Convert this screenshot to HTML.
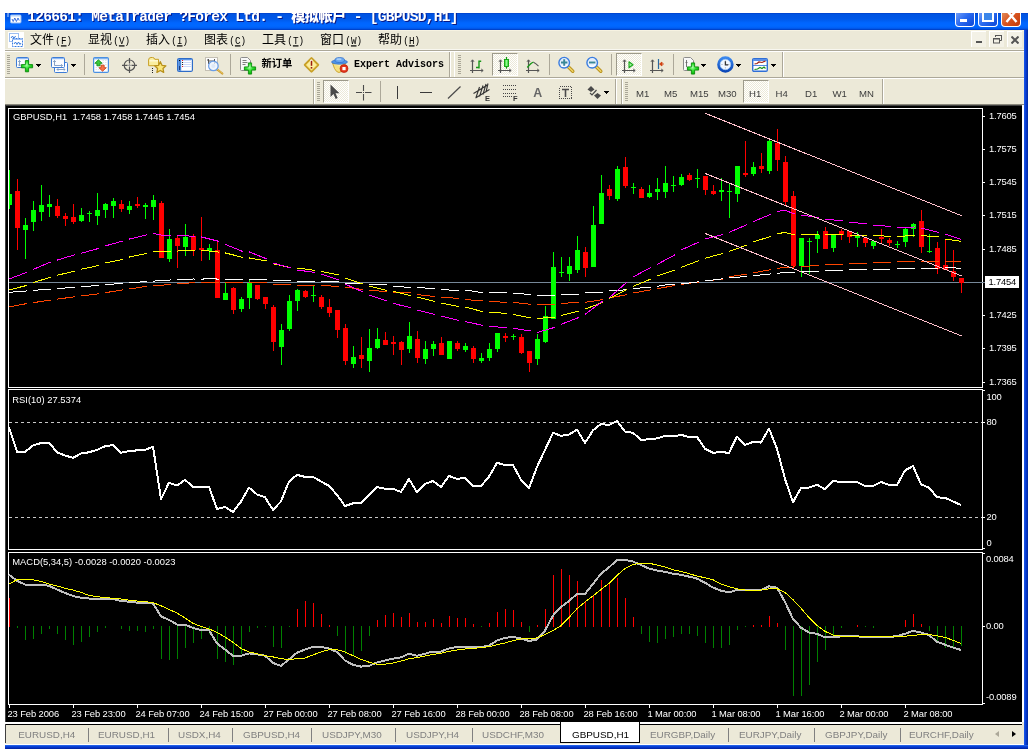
<!DOCTYPE html>
<html lang="zh"><head><meta charset="utf-8"><title>126661: MetaTrader - [GBPUSD,H1]</title>
<style>
html,body{margin:0;padding:0;background:#fff}
body{width:1028px;height:749px;position:relative;overflow:hidden;will-change:transform;font-family:"Liberation Sans","Noto Sans CJK SC",sans-serif}

.abs{position:absolute}
#title{position:absolute;left:5px;top:13px;width:1023px;height:17px;overflow:hidden;
 background:linear-gradient(to bottom,#0046d2 0px,#0046d2 1px,#0054e3 1.5px,#0058e8 6px,#0066ff 10px,#0068ff 13px,#005ef5 15px,#0050dd 16px,#0036b8 17px)}
#title .t{position:absolute;left:22.2px;top:-4.5px;height:17px;white-space:pre;color:#fff;font:bold 14.5px/17px "Liberation Mono","Noto Sans CJK SC",monospace;letter-spacing:-0.7px;text-shadow:1px 1px 0 #0a1883}
#title .t b{font-size:14px;letter-spacing:-0.4px}
.tb{position:absolute;top:0;width:18px;height:13px;border:1px solid #fff;border-top:none;border-radius:0 0 4px 4px;box-sizing:content-box}
#rb{position:absolute;left:1024px;top:30px;width:4px;height:719px;background:linear-gradient(to right,#1a5ae8 0%,#0a3fd8 40%,#00289e 100%)}
#bb{position:absolute;left:5px;top:745px;width:1023px;height:4px;background:linear-gradient(to bottom,#3a78f0 0%,#0a4ae0 25%,#0535c8 60%,#00209a 100%)}
#menu{position:absolute;left:5px;top:30px;width:1019px;height:20px;background:#ece9d8}
#menu .m{position:absolute;top:2px;height:14px;line-height:14px;font-size:12px;color:#000;white-space:pre;font-family:"Noto Sans CJK SC","WenQuanYi Zen Hei",sans-serif}
#menu .m i{font-style:normal;font-family:"Liberation Mono",monospace;font-size:9.3px;letter-spacing:0;margin-left:1.3px;display:inline-block;transform:scaleY(1.22);transform-origin:50% 62%}
#menu .m u{text-decoration:underline}
.mdi{position:absolute;top:1px;width:15px;height:16px;background:#f3f1e6;border-left:1px solid #fff;border-top:1px solid #fff;box-sizing:border-box}
#tbar{position:absolute;left:5px;top:50px;width:1019px;height:55px;background:#ece9d8}
.hl{position:absolute;left:0;width:1019px;height:1px}
.grip{position:absolute;width:3px;height:19px;background:repeating-linear-gradient(to bottom,#a9a697 0,#a9a697 1px,transparent 1px,transparent 2px)}
.vsep{position:absolute;width:1px;height:21px;background:#aca899}
.tend{position:absolute;width:2px;height:25px;background:linear-gradient(to right,#aca899 0,#aca899 1px,#fff 1px,#fff 2px)}
.pressed{position:absolute;box-sizing:border-box;border:1px solid;border-color:#9d9a8b #fff #fff #9d9a8b;
 background-color:#fff;background-image:linear-gradient(45deg,#ece9d8 25%,transparent 25%,transparent 75%,#ece9d8 75%),linear-gradient(45deg,#ece9d8 25%,transparent 25%,transparent 75%,#ece9d8 75%);background-size:2px 2px;background-position:0 0,1px 1px}
.ic{position:absolute;overflow:visible}
.dd{position:absolute;width:5px;height:3px;background:linear-gradient(#000,#000) 0 0/5px 1px no-repeat,linear-gradient(#000,#000) 1px 1px/3px 1px no-repeat,linear-gradient(#000,#000) 2px 2px/1px 1px no-repeat}
.tf{position:absolute;top:38px;height:12px;line-height:12px;font-size:9.6px;color:#3c3c3c;white-space:pre}
#tabs{position:absolute;left:5px;top:722px;width:1019px;height:22px;background:#ece9d8}
#tabs .tab{position:absolute;top:6px;height:14px;line-height:14px;font-size:9.9px;color:#808080;white-space:pre}
#tabs .sp{position:absolute;top:6px;width:1px;height:14px;background:#808080}

</style></head><body>
<div id="title">
<svg class="ic" style="left:2px;top:-1px" width="16" height="12" viewBox="0 0 16 12" ><path d="M1 5V1.500q0-1 1-1h4" fill="none" stroke="#9cc0f8" stroke-width="1.200"/><rect x="3.500" y="3" width="10.500" height="8" rx="1" fill="#fff" stroke="#8ab4f4" stroke-width="1"/><rect x="4" y="3" width="9.500" height="1.500" fill="#b8d4fa"/><path d="M5 7l1.200 2.500 1.600-3.500 1.600 3.500 1.600-3.500 1.200 2.500" fill="none" stroke="#2a62d8" stroke-width=".9"/></svg>
<div class="t">126661: MetaTrader ?Forex Ltd. - <b>模拟帐户</b> - [GBPUSD,H1]</div>
<div class="tb" style="left:950px;background:linear-gradient(135deg,#6f9cf8 0%,#2a6af0 45%,#0b46d6 100%)"><div class="abs" style="left:4px;top:6px;width:7px;height:3px;background:#fff"></div></div>
<div class="tb" style="left:973px;background:linear-gradient(135deg,#6f9cf8 0%,#2a6af0 45%,#0b46d6 100%)"><div class="abs" style="left:3px;top:-4px;width:12px;height:13px;border:2px solid #fff;border-top-width:3px;box-sizing:border-box;background:#3b86ea"></div></div>
<div class="tb" style="left:996px;background:linear-gradient(135deg,#e08a5a 0%,#d9541f 45%,#c23a0c 100%)"><svg class="abs" style="left:3px;top:-3px" width="13" height="14" viewBox="0 0 13 14"><path d="M0.500 -1L11.500 12M12.500 -1L1.500 12" stroke="#fff" stroke-width="2.4" fill="none"/></svg></div>
</div>
<div id="rb"></div>
<div id="menu"><div class="abs" style="left:0;top:0;width:1019px;height:1px;background:#f7f3e2"></div>
<svg class="ic" style="left:3px;top:2px" width="16" height="16" viewBox="0 0 16 16" ><rect width="16" height="16" fill="#fff"/><rect x="1.5" y="1.5" width="9" height="8" fill="#fff" stroke="#3a7de0" stroke-dasharray="1 1"/><path d="M3 6l1.5-2 1.5 2.5 1.5-2.5" fill="none" stroke="#3a7de0"/><rect x="4.500" y="6.500" width="10" height="8" fill="#fff" stroke="#3a7de0" stroke-dasharray="2 1"/><rect x="5" y="7" width="9" height="1" fill="#9cc0f8"/><path d="M6 12l1.500-2 1.500 2.500 1.500-2.500 1.500 2.500 1-1.500" fill="none" stroke="#3a7de0"/></svg>
<div class="m" style="left:25px">文件<i>(<u>F</u>)</i></div>
<div class="m" style="left:83px">显视<i>(<u>V</u>)</i></div>
<div class="m" style="left:141px">插入<i>(<u>I</u>)</i></div>
<div class="m" style="left:199px">图表<i>(<u>C</u>)</i></div>
<div class="m" style="left:257px">工具<i>(<u>T</u>)</i></div>
<div class="m" style="left:315px">窗口<i>(<u>W</u>)</i></div>
<div class="m" style="left:373px">帮助<i>(<u>H</u>)</i></div>
<div class="mdi" style="left:966px"><div class="abs" style="left:4px;top:9px;width:6px;height:2px;background:#555"></div></div>
<div class="mdi" style="left:984px"><svg class="abs" style="left:2px;top:2px" width="10" height="10" viewBox="0 0 10 10"><path d="M3.500 3V1.500H9.500V6.500H8" fill="none" stroke="#555"/><rect x="3" y="1" width="7" height="1" fill="#555"/><rect x="1.500" y="4.500" width="6" height="4.500" fill="none" stroke="#555"/><rect x="1" y="4" width="7" height="1.500" fill="#555"/></svg></div>
<div class="mdi" style="left:1002px"><svg class="abs" style="left:3px;top:4px" width="8" height="8" viewBox="0 0 8 8"><path d="M0.500 0.500L7.500 7.500M7.500 0.500L0.500 7.500" stroke="#555" stroke-width="2" fill="none"/></svg></div>
</div>
<div class="abs" style="left:5px;top:49px;width:1019px;height:1px;background:#f8f7f0"></div>
<div id="tbar">
<div class="hl" style="top:0;background:#aca899"></div><div class="hl" style="top:1px;background:#fff"></div>
<div class="hl" style="top:27px;background:#aca899"></div><div class="hl" style="top:28px;background:#fff"></div>
<div class="hl" style="top:54px;background:#8a887c"></div>
<div class="grip" style="left:2px;top:5px"></div>
<svg class="ic" style="left:11px;top:7px" width="18" height="16" viewBox="0 0 18 16" ><rect x="0.5" y="0.5" width="12" height="10" rx="1" fill="#fafcff" stroke="#3d7cd6"/><rect x="1" y="1" width="11" height="1.200" fill="#8db8f4"/><path d="M3.500 3.500v5.500M2.200 5l1.300-1.500 1.300 1.500M2.200 7.500l1.300 1.500 1.300-1.500" stroke="#7a98c0" fill="none" stroke-width=".9"/><defs><radialGradient id="pg5032" cx="45%" cy="40%" r="60%"><stop offset="0" stop-color="#a8ffa8"/><stop offset=".5" stop-color="#2ee02e"/><stop offset="1" stop-color="#08b008"/></radialGradient></defs><path d="M9.4 3.6h3.200v4h4v3.200h-4v4h-3.200v-4H5.4v-3.200h4z" fill="url(#pg5032)" stroke="#0c8c0c" stroke-width=".9"/></svg>
<div class="dd" style="left:31px;top:14px"></div>
<svg class="ic" style="left:46px;top:7px" width="18" height="16" viewBox="0 0 18 16" ><rect x="3.500" y="5.500" width="13" height="10" rx="1" fill="#fafcff" stroke="#3d7cd6"/><path d="M6 12.500h8M7.300 11.200l-1.300 1.300 1.300 1.300M12.700 11.200l1.300 1.300-1.300 1.300" stroke="#7a98c0" fill="none" stroke-width=".9"/><rect x="0.5" y="0.5" width="13" height="10" rx="1" fill="#fafcff" stroke="#3d7cd6"/><rect x="1" y="1" width="12" height="1.200" fill="#8db8f4"/><path d="M3.500 3.500v5M2.200 5l1.300-1.500 1.300 1.500M3.500 8.500h8M10.200 7.200l1.300 1.300-1.300 1.300" stroke="#7a98c0" fill="none" stroke-width=".9"/></svg>
<div class="dd" style="left:66px;top:14px"></div>
<div class="vsep" style="left:79px;top:4px"></div>
<svg class="ic" style="left:88px;top:7px" width="16" height="16" viewBox="0 0 16 16" ><rect x="0.6" y="0.6" width="14.800" height="14.800" rx="1.200" fill="#fcfdff" stroke="#4a90e2" stroke-width="1.200"/><rect x="1" y="1" width="14" height="1.300" fill="#7fb2ee"/><path d="M9.500 3.500h4M9.500 5.500h4M9.500 7.500h4M2.500 10.500h4M2.500 12.500h4" stroke="#d8dde6" stroke-width=".8" stroke-dasharray="1.500 1"/><path d="M5.400 2.800L9.200 6.300H7.100V8.800H3.900V6.300H1.800z" fill="#3cc83c" stroke="#0a8a0a" stroke-width=".8" stroke-linejoin="round"/><path d="M9.600 14.200L5.900 10.700H8V8.200h3.200v2.500h2.100z" fill="#f4724a" stroke="#c83c10" stroke-width=".8" stroke-linejoin="round"/></svg>
<svg class="ic" style="left:116px;top:7px" width="17" height="17" viewBox="0 0 17 17" ><g fill="none" stroke="#555" stroke-width="1.200"><circle cx="8.500" cy="8.300" r="5.300"/><path d="M8.500 1v5.500M8.500 10v6M1 8.300h5.500M10.500 8.300h5.500"/><path d="M8.500 6.500v3.500M6.500 8.300h4" stroke="#999" stroke-width="1"/></g></svg>
<svg class="ic" style="left:143px;top:6px" width="20" height="19" viewBox="0 0 20 19" ><path d="M0.600 4q0-2.500 2.400-2.500h1.500q1.800 0 2.300 1.800h3.700v6.400H0.600z" fill="#faeea0" stroke="#c8a028" stroke-width="1"/><path d="M1.500 4.800h8.500" stroke="#fffbe0" stroke-width="1.200"/><g shape-rendering="crispEdges" fill="#222"><rect x="4" y="12" width="1" height="1"/><rect x="4" y="14" width="1" height="1"/><rect x="4" y="16" width="1" height="1"/></g><path d="M12.300 5.700l1.700 3.600 3.900.5-2.900 2.700.7 3.900-3.400-1.900-3.400 1.900.7-3.900-2.900-2.700 3.900-.5z" fill="#fae67a" stroke="#b8901a" stroke-width="1.300" stroke-linejoin="round"/></svg>
<svg class="ic" style="left:172px;top:8px" width="16" height="14" viewBox="0 0 16 14" ><rect x="0.6" y="0.6" width="14.800" height="12.800" rx="1.500" fill="#fff" stroke="#2e6cc8" stroke-width="1.200"/><rect x="1" y="1" width="14" height="1" fill="#5b95e4"/><rect x="1.200" y="1.500" width="3" height="11.300" fill="#4a88dc"/><rect x="2" y="8" width="1" height="4" fill="#1c3f80"/><rect x="2" y="2" width="1" height="1" fill="#000"/><g shape-rendering="crispEdges"><rect x="6" y="2" width="8" height="1" fill="#cddafa"/><rect x="6" y="4" width="8" height="1" fill="#cddafa"/><rect x="6" y="6" width="8" height="1" fill="#cddafa"/><rect x="6" y="8" width="8" height="1" fill="#cddafa"/><rect x="5" y="2" width="1" height="1" fill="#f01818"/><rect x="5" y="4" width="1" height="1" fill="#222"/><rect x="5" y="6" width="1" height="1" fill="#222"/><rect x="5" y="8" width="1" height="1" fill="#f01818"/></g></svg>
<svg class="ic" style="left:200px;top:7px" width="19" height="18" viewBox="0 0 19 18" ><rect x="0.5" y="0.5" width="12" height="13" fill="#fdfdfd" stroke="#c4c0b4"/><path d="M3.500 2v5M9.500 2v5M3.500 4h6M2 3h1.500M9.500 5.500h1.500" stroke="#444" stroke-width=".9" fill="none"/><path d="M12.300 12.500l5 4" stroke="#c9962a" stroke-width="2.200" stroke-linecap="round"/><path d="M12.300 12.300l5 4" stroke="#f0d470" stroke-width=".8" stroke-linecap="round"/><circle cx="8.400" cy="8.900" r="4.800" fill="#eef4fd" fill-opacity=".8" stroke="#6a9ee8" stroke-width="1.200"/><circle cx="8.400" cy="8.900" r="2" fill="#d4e2f6" fill-opacity=".7"/></svg>
<div class="vsep" style="left:225px;top:4px"></div>
<svg class="ic" style="left:235px;top:7px" width="17" height="18" viewBox="0 0 17 18" ><path d="M0.500 1.500q0-1 1-1h6l3 3v9q0 1-1 1h-8q-1 0-1-1z" fill="#f8f8f8" stroke="#8c8c8c"/><path d="M2.500 3.500h4M2.500 5.500h5M2.500 7.500h3" stroke="#707070" stroke-width=".9"/><defs><radialGradient id="pg4055" cx="45%" cy="40%" r="60%"><stop offset="0" stop-color="#a8ffa8"/><stop offset=".5" stop-color="#2ee02e"/><stop offset="1" stop-color="#08b008"/></radialGradient></defs><path d="M8.4 5.9h3.200v4h4v3.200h-4v4h-3.200v-4H4.4v-3.200h4z" fill="url(#pg4055)" stroke="#0c8c0c" stroke-width=".9"/></svg>
<div class="abs" style="left:256.5px;top:6px;height:14px;line-height:14px;font:bold 10.300px/14px 'Noto Sans CJK SC','WenQuanYi Zen Hei',sans-serif;color:#000;white-space:pre">新订单</div>
<svg class="ic" style="left:298px;top:6px" width="17" height="18" viewBox="0 0 17 18" ><path d="M8.500 2.300L15 8.900 8.500 15.500 2 8.900z" fill="#fbeea0" stroke="#c8a028" stroke-width="2.400" stroke-linejoin="round"/><path d="M8.500 3.500L13.800 8.900 8.500 14.300 3.200 8.900z" fill="#fbeea0" stroke="#f6dc70" stroke-width=".8" stroke-linejoin="round"/><circle cx="8.300" cy="5" r="1.400" fill="#fff" fill-opacity=".8"/><path d="M8.500 4.800v5" stroke="#9c1c10" stroke-width="1.500"/><rect x="7.700" y="11" width="1.600" height="1.600" fill="#9c1c10"/></svg>
<svg class="ic" style="left:326px;top:6px" width="18" height="18" viewBox="0 0 18 18" ><path d="M1.500 7h13l-1.200 4.500q-2.300 5-5.300 5-2.500 0-4.500-4z" fill="#f6e080" stroke="#c8a028" stroke-width=".9"/><path d="M3 8h9l-1 3z" fill="#fdf4b8" fill-opacity=".7"/><ellipse cx="8.500" cy="6" rx="8" ry="2.200" fill="#4f94e6" stroke="#2c6cc8" stroke-width=".7"/><ellipse cx="8.700" cy="4" rx="4.800" ry="2.500" fill="#6aa8f0" stroke="#2c6cc8" stroke-width=".7"/><ellipse cx="8" cy="3.200" rx="2.600" ry="1" fill="#b8d8fa" fill-opacity=".8"/><circle cx="13" cy="12.600" r="4" fill="#e23418" stroke="#b01808" stroke-width=".6"/><rect x="11.400" y="11" width="3.200" height="3.200" fill="#fff"/></svg>
<div class="abs" style="left:349px;top:8px;height:14px;font:bold 10px/14px 'Liberation Mono',monospace;color:#000;white-space:pre">Expert Advisors</div>
<div class="tend" style="left:444px;top:2px"></div>
<div class="abs" style="left:449px;top:2px;width:1px;height:25px;background:#fff"></div>
<div class="grip" style="left:453px;top:5px"></div>
<svg class="ic" style="left:464px;top:8px" width="16" height="16" viewBox="0 0 16 16" ><path d="M3.500 2v13M1 12.500h13" stroke="#555" stroke-width="1.200" fill="none"/><path d="M2 3.800l1.500-2 1.500 2M12.200 11l2 1.500-2 1.500" stroke="#555" stroke-width="1" fill="none"/><path d="M10 2.500v8M10 3.200h2.200M7 9.500h3" stroke="#189818" stroke-width="1.400" fill="none"/></svg>
<div class="pressed" style="left:487px;top:3px;width:26px;height:23px"></div>
<svg class="ic" style="left:492px;top:8px" width="16" height="16" viewBox="0 0 16 16" ><path d="M3.500 2v13M1 12.500h13" stroke="#555" stroke-width="1.200" fill="none"/><path d="M2 3.800l1.500-2 1.500 2M12.200 11l2 1.500-2 1.500" stroke="#555" stroke-width="1" fill="none"/><defs><linearGradient id="cg" x1="0" x2="1"><stop offset="0" stop-color="#20d020"/><stop offset=".5" stop-color="#90f890"/><stop offset="1" stop-color="#20d020"/></linearGradient></defs><path d="M9.500 -1v11.700" stroke="#10a010" stroke-width="1.200"/><rect x="7.500" y="1.500" width="4" height="7" fill="url(#cg)" stroke="#10a010" stroke-width=".9"/></svg>
<svg class="ic" style="left:520px;top:8px" width="16" height="16" viewBox="0 0 16 16" ><path d="M3.500 2v13M1 12.500h13" stroke="#555" stroke-width="1.200" fill="none"/><path d="M2 3.800l1.500-2 1.500 2M12.200 11l2 1.500-2 1.500" stroke="#555" stroke-width="1" fill="none"/><path d="M2.300 9.500q3.500-4.500 6.200-5.300" stroke="#189818" stroke-width="1.300" fill="none"/><path d="M8.500 4.200q2.500 1.300 5 4" stroke="#555" stroke-width="1.100" fill="none"/></svg>
<div class="vsep" style="left:544px;top:4px"></div>
<svg class="ic" style="left:552px;top:6px" width="18" height="18" viewBox="0 0 18 18" ><path d="M11.500 11l4.300 4.300" stroke="#b8901a" stroke-width="3.400" stroke-linecap="round"/><path d="M11.500 11l4.300 4.300" stroke="#f0d468" stroke-width="1.600" stroke-linecap="round"/><circle cx="7.200" cy="6.700" r="5.300" fill="#e4eefc" stroke="#3a7de0" stroke-width="1.400"/><path d="M4 9.500q3.500 2 6.500-1" stroke="#fff" stroke-width="1.500" fill="none" stroke-opacity=".8"/><path d="M4 6.500h6.400M7.200 3.300v6.400" stroke="#3a8898" stroke-width="1.900"/></svg>
<svg class="ic" style="left:580px;top:6px" width="18" height="18" viewBox="0 0 18 18" ><path d="M11.500 11l4.300 4.300" stroke="#b8901a" stroke-width="3.400" stroke-linecap="round"/><path d="M11.500 11l4.300 4.300" stroke="#f0d468" stroke-width="1.600" stroke-linecap="round"/><circle cx="7.200" cy="6.700" r="5.300" fill="#e4eefc" stroke="#3a7de0" stroke-width="1.400"/><path d="M4 9.500q3.500 2 6.500-1" stroke="#fff" stroke-width="1.500" fill="none" stroke-opacity=".8"/><path d="M4 6.500h6.400" stroke="#3a8898" stroke-width="1.900"/></svg>
<div class="vsep" style="left:606px;top:4px"></div>
<div class="pressed" style="left:611px;top:3px;width:26px;height:23px"></div>
<svg class="ic" style="left:616px;top:8px" width="16" height="16" viewBox="0 0 16 16" ><path d="M3.500 2v13M1 12.500h13" stroke="#555" stroke-width="1.200" fill="none"/><path d="M2 3.800l1.500-2 1.500 2M12.200 11l2 1.500-2 1.500" stroke="#555" stroke-width="1" fill="none"/><path d="M8 3.800l4 3-4 3z" fill="#a0f0a0" stroke="#18a818" stroke-width="1.100" stroke-linejoin="round"/></svg>
<svg class="ic" style="left:644px;top:8px" width="16" height="16" viewBox="0 0 16 16" ><path d="M3.500 2v13M1 12.500h13" stroke="#555" stroke-width="1.200" fill="none"/><path d="M2 3.800l1.500-2 1.500 2M12.200 11l2 1.500-2 1.500" stroke="#555" stroke-width="1" fill="none"/><path d="M9.500 1v10" stroke="#2a6aa0" stroke-width="1.200"/><path d="M15 6h-4M13 4l-2.500 2 2.500 2z" stroke="#d04010" fill="#d04010" stroke-width=".8"/></svg>
<div class="vsep" style="left:668px;top:4px"></div>
<svg class="ic" style="left:678px;top:7px" width="17" height="18" viewBox="0 0 17 18" ><path d="M0.500 1.500q0-1 1-1h6l3 3v9q0 1-1 1h-8q-1 0-1-1z" fill="#f8f8f8" stroke="#8c8c8c"/><path d="M3.500 3v7M2.500 5.500h2" stroke="#666" stroke-width=".9" fill="none"/><defs><radialGradient id="pg4055" cx="45%" cy="40%" r="60%"><stop offset="0" stop-color="#a8ffa8"/><stop offset=".5" stop-color="#2ee02e"/><stop offset="1" stop-color="#08b008"/></radialGradient></defs><path d="M8.4 5.9h3.200v4h4v3.200h-4v4h-3.200v-4H4.4v-3.200h4z" fill="url(#pg4055)" stroke="#0c8c0c" stroke-width=".9"/></svg>
<div class="dd" style="left:696px;top:14px"></div>
<svg class="ic" style="left:712px;top:6px" width="17" height="17" viewBox="0 0 17 17" ><defs><linearGradient id="ck" x1="0" y1="0" x2="0" y2="1"><stop offset="0" stop-color="#3a88ee"/><stop offset="1" stop-color="#0c48b8"/></linearGradient></defs><circle cx="8.400" cy="8.500" r="6.800" fill="#f2f7fe" stroke="url(#ck)" stroke-width="2.900"/><circle cx="8.400" cy="8.500" r="5.200" fill="none" stroke="#9cc4f4" stroke-width=".7"/><path d="M8.400 4.600v1M8.400 11.400v1M4.500 8.500h1M11.300 8.500h1" stroke="#8a96a8" stroke-width=".8"/><path d="M8.400 5.200v3.600h2.800" stroke="#333" stroke-width="1.300" fill="none"/></svg>
<div class="dd" style="left:731px;top:14px"></div>
<svg class="ic" style="left:747px;top:8px" width="16" height="14" viewBox="0 0 16 14" ><rect x="0.7" y="0.7" width="14.600" height="12.600" rx="1.200" fill="#fff" stroke="#2f6fd6" stroke-width="1.400"/><rect x="1" y="1" width="14" height="2" fill="#5a90e8"/><path d="M1 7.500h14" stroke="#2f6fd6" stroke-width=".8"/><path d="M2.500 6l2.500-.5 2-1.500 3 .5 3.500-1.500" stroke="#a02010" stroke-width="1.200" fill="none"/><path d="M2.500 11.500l3-.5 2.500-1.500 2 1 2-1.500 1.500 1.500" stroke="#18901a" stroke-width="1.200" fill="none"/></svg>
<div class="dd" style="left:766px;top:14px"></div>
<div class="tend" style="left:777px;top:2px"></div>
<div class="tend" style="left:308px;top:29px"></div>
<div class="grip" style="left:312px;top:32px"></div>
<div class="pressed" style="left:318px;top:30px;width:26px;height:23px"></div>
<svg class="ic" style="left:324px;top:34px" width="10" height="16" viewBox="0 0 10 16" ><path d="M1.500 0.500v12.500l3-3 2.200 5 2-.9-2.200-4.800h4z" fill="#4a4a4a"/></svg>
<svg class="ic" style="left:351px;top:35px" width="16" height="16" viewBox="0 0 16 16" ><path d="M7.500 0v6M7.500 9v6.500M0 7.500h6M9 7.500h6.500" stroke="#4a4a4a" stroke-width="1.100" fill="none"/><rect x="7" y="7" width="1" height="1" fill="#4a4a4a"/></svg>
<div class="vsep" style="left:375px;top:31px"></div>
<svg class="ic" style="left:391px;top:35px" width="3" height="15" viewBox="0 0 3 15" ><path d="M1.500 1v13" stroke="#3a3a3a" stroke-width="1" shape-rendering="crispEdges"/></svg>
<svg class="ic" style="left:414px;top:40px" width="14" height="4" viewBox="0 0 14 4" ><path d="M1 2.500h12" stroke="#3a3a3a" stroke-width="1" shape-rendering="crispEdges"/></svg>
<svg class="ic" style="left:442px;top:35px" width="15" height="15" viewBox="0 0 15 15" ><path d="M1 13.500L13.500 1.500" stroke="#4a4a4a" stroke-width="1.200"/></svg>
<svg class="ic" style="left:467px;top:33px" width="19" height="19" viewBox="0 0 19 19" ><g stroke="#333" stroke-width="1.100" fill="none"><path d="M1.500 10.500L15.500 2M3.500 15L17.500 6.500M4 14.500L7.500 4M7.500 13.500L11 2.500M11 11.500L14 1M14 9L16 .5"/></g><text x="13" y="17.700" font-family="Liberation Sans,sans-serif" font-weight="bold" font-size="7.500" fill="#333">E</text></svg>
<svg class="ic" style="left:497px;top:34px" width="17" height="18" viewBox="0 0 17 18" ><g fill="#444" shape-rendering="crispEdges"><rect x="1" y="1" width="1" height="1"/><rect x="3" y="1" width="1" height="1"/><rect x="5" y="1" width="1" height="1"/><rect x="7" y="1" width="1" height="1"/><rect x="9" y="1" width="1" height="1"/><rect x="11" y="1" width="1" height="1"/><rect x="13" y="1" width="1" height="1"/><rect x="1" y="5" width="1" height="1"/><rect x="3" y="5" width="1" height="1"/><rect x="5" y="5" width="1" height="1"/><rect x="7" y="5" width="1" height="1"/><rect x="9" y="5" width="1" height="1"/><rect x="11" y="5" width="1" height="1"/><rect x="13" y="5" width="1" height="1"/><rect x="1" y="9" width="1" height="1"/><rect x="3" y="9" width="1" height="1"/><rect x="5" y="9" width="1" height="1"/><rect x="7" y="9" width="1" height="1"/><rect x="9" y="9" width="1" height="1"/><rect x="11" y="9" width="1" height="1"/><rect x="13" y="9" width="1" height="1"/><rect x="1" y="12" width="1" height="1"/><rect x="3" y="12" width="1" height="1"/><rect x="5" y="12" width="1" height="1"/><rect x="7" y="12" width="1" height="1"/><rect x="9" y="12" width="1" height="1"/></g><text x="11" y="16.700" font-family="Liberation Sans,sans-serif" font-weight="bold" font-size="7.500" fill="#333">F</text></svg>
<div class="abs" style="left:528.3px;top:35.7px;font:bold 12.400px/14px 'Liberation Sans',sans-serif;color:#666">A</div>
<svg class="ic" style="left:554px;top:35px" width="14" height="15" viewBox="0 0 14 15" ><rect x="0.5" y="1.500" width="12" height="12" fill="none" stroke="#4a4a4a" stroke-dasharray="1 1" shape-rendering="crispEdges"/><path d="M3 4.500h7M6.500 4.500v7.500" stroke="#4a4a4a" stroke-width="1.600" fill="none"/></svg>
<svg class="ic" style="left:582px;top:35px" width="15" height="15" viewBox="0 0 15 15" ><path d="M4 1l3.500 3.500-3.500 2.500-3.500-2.500z" fill="#4a4a4a"/><path d="M3 8l2 2 4.500-5" stroke="#4a4a4a" stroke-width="1.200" fill="none"/><path d="M10.500 8l3.500 2.500-3.500 3.500-3.500-3.500z" fill="#4a4a4a"/></svg>
<div class="dd" style="left:599px;top:41px"></div>
<div class="tend" style="left:610px;top:29px"></div>
<div class="tend" style="left:616px;top:29px"></div>
<div class="grip" style="left:620px;top:32px"></div>
<div class="tf" style="left:631.0px">M1</div>
<div class="tf" style="left:659.0px">M5</div>
<div class="tf" style="left:685.0px">M15</div>
<div class="tf" style="left:713.0px">M30</div>
<div class="tf" style="left:770.5px">H4</div>
<div class="tf" style="left:800.0px">D1</div>
<div class="tf" style="left:827.5px">W1</div>
<div class="tf" style="left:854.0px">MN</div>
<div class="pressed" style="left:738px;top:30px;width:26px;height:23px"></div>
<div class="tf" style="left:744px">H1</div>
<div class="tend" style="left:877px;top:29px"></div>
</div>
<svg id="chart" width="1028" height="749" viewBox="0 0 1028 749" shape-rendering="crispEdges" style="position:absolute;left:0;top:0">
<defs><clipPath id="dash"><rect x="9" y="100" width="18" height="300"/><rect x="33" y="100" width="18" height="300"/><rect x="57" y="100" width="18" height="300"/><rect x="81" y="100" width="18" height="300"/><rect x="105" y="100" width="18" height="300"/><rect x="129" y="100" width="18" height="300"/><rect x="153" y="100" width="18" height="300"/><rect x="177" y="100" width="18" height="300"/><rect x="201" y="100" width="18" height="300"/><rect x="225" y="100" width="18" height="300"/><rect x="249" y="100" width="18" height="300"/><rect x="273" y="100" width="18" height="300"/><rect x="297" y="100" width="18" height="300"/><rect x="321" y="100" width="18" height="300"/><rect x="345" y="100" width="18" height="300"/><rect x="369" y="100" width="18" height="300"/><rect x="393" y="100" width="18" height="300"/><rect x="417" y="100" width="18" height="300"/><rect x="441" y="100" width="18" height="300"/><rect x="465" y="100" width="18" height="300"/><rect x="489" y="100" width="18" height="300"/><rect x="513" y="100" width="18" height="300"/><rect x="537" y="100" width="18" height="300"/><rect x="561" y="100" width="18" height="300"/><rect x="585" y="100" width="18" height="300"/><rect x="609" y="100" width="18" height="300"/><rect x="633" y="100" width="18" height="300"/><rect x="657" y="100" width="18" height="300"/><rect x="681" y="100" width="18" height="300"/><rect x="705" y="100" width="18" height="300"/><rect x="729" y="100" width="18" height="300"/><rect x="753" y="100" width="18" height="300"/><rect x="777" y="100" width="18" height="300"/><rect x="801" y="100" width="18" height="300"/><rect x="825" y="100" width="18" height="300"/><rect x="849" y="100" width="18" height="300"/><rect x="873" y="100" width="18" height="300"/><rect x="897" y="100" width="18" height="300"/><rect x="921" y="100" width="18" height="300"/><rect x="945" y="100" width="18" height="300"/><rect x="969" y="100" width="18" height="300"/></clipPath></defs>
<rect x="5" y="105" width="1017" height="617" fill="#000"/>
<rect x="5" y="105" width="1017" height="1" fill="#404040"/><rect x="5" y="105" width="1" height="617" fill="#404040"/>
<g stroke="#fff" fill="none">
<path d="M8.5 387.5V108.5H982.5V387.5H8.5"/>
<path d="M8.5 549.5V389.5H982.5V549.5H8.5"/>
<path d="M8.5 704.5V552.5H982.5V704.5H8.5"/>
</g>
<rect x="9" y="282" width="976" height="1" fill="#778899"/>
<path d="M9 170h1V209h-1zM7 194h5V205h-5zM25 218h1V259h-1zM23 225h5V230h-5zM33 201h1V231h-1zM31 210h5V222h-5zM41 185h1V221h-1zM39 205h5V212h-5zM49 195h1V217h-1zM47 204h5V207h-5zM81 208h1V222h-1zM79 215h5V221h-5zM89 211h1V222h-1zM87 213h5v1h-5zM97 193h1V225h-1zM95 210h5V216h-5zM105 203h1V218h-1zM103 204h5V210h-5zM113 198h1V218h-1zM111 201h5V206h-5zM129 201h1V214h-1zM127 206h5V210h-5zM145 203h1V219h-1zM143 205h5V207h-5zM153 195h1V220h-1zM151 200h5V207h-5zM169 229h1V262h-1zM167 239h5V259h-5zM185 224h1V256h-1zM183 237h5V247h-5zM209 244h1V260h-1zM207 248h5V251h-5zM225 282h1V300h-1zM223 293h5V300h-5zM241 297h1V312h-1zM239 299h5V309h-5zM249 279h1V309h-1zM247 283h5V298h-5zM281 324h1V365h-1zM279 330h5V347h-5zM289 295h1V331h-1zM287 301h5V329h-5zM297 289h1V311h-1zM295 290h5V301h-5zM313 286h1V302h-1zM311 295h5v1h-5zM353 346h1V368h-1zM351 357h5V364h-5zM369 329h1V372h-1zM367 348h5V361h-5zM377 328h1V349h-1zM375 339h5V348h-5zM409 322h1V353h-1zM407 336h5V349h-5zM425 341h1V364h-1zM423 349h5V359h-5zM433 341h1V356h-1zM431 344h5V349h-5zM449 341h1V359h-1zM447 341h5V359h-5zM465 343h1V352h-1zM463 346h5V350h-5zM481 353h1V363h-1zM479 358h5V361h-5zM489 343h1V361h-1zM487 349h5V358h-5zM497 333h1V352h-1zM495 333h5V349h-5zM513 334h1V340h-1zM511 336h5v1h-5zM537 334h1V365h-1zM535 339h5V359h-5zM545 306h1V343h-1zM543 316h5V342h-5zM553 252h1V319h-1zM551 267h5V319h-5zM561 257h1V277h-1zM559 272h5v1h-5zM569 257h1V281h-1zM567 266h5V274h-5zM577 236h1V273h-1zM575 250h5V270h-5zM593 206h1V267h-1zM591 225h5V267h-5zM601 175h1V224h-1zM599 193h5V224h-5zM617 166h1V201h-1zM615 169h5V199h-5zM633 183h1V194h-1zM631 187h5v1h-5zM649 185h1V198h-1zM647 193h5V197h-5zM657 178h1V200h-1zM655 189h5V192h-5zM665 166h1V198h-1zM663 183h5V192h-5zM673 176h1V192h-1zM671 185h5v1h-5zM681 174h1V186h-1zM679 177h5V185h-5zM697 169h1V188h-1zM695 178h5v1h-5zM721 178h1V201h-1zM719 190h5V192h-5zM729 184h1V218h-1zM727 191h5v1h-5zM737 166h1V202h-1zM735 166h5V194h-5zM753 162h1V176h-1zM751 167h5V174h-5zM769 139h1V174h-1zM767 141h5V171h-5zM801 238h1V277h-1zM799 238h5V266h-5zM809 238h1V274h-1zM807 241h5v1h-5zM817 231h1V253h-1zM815 235h5V239h-5zM833 235h1V252h-1zM831 235h5V248h-5zM857 232h1V247h-1zM855 236h5V238h-5zM873 241h1V249h-1zM871 241h5V246h-5zM897 241h1V248h-1zM895 244h5v1h-5zM905 228h1V247h-1zM903 229h5V242h-5zM913 223h1V237h-1zM911 224h5V229h-5zM929 234h1V253h-1zM927 251h5v1h-5z" fill="#00ff00"/>
<path d="M17 179h1V250h-1zM15 191h5V228h-5zM57 199h1V218h-1zM55 206h5V216h-5zM65 213h1V226h-1zM63 216h5V219h-5zM73 204h1V224h-1zM71 217h5V222h-5zM121 200h1V212h-1zM119 204h5V209h-5zM137 197h1V208h-1zM135 204h5V206h-5zM161 201h1V258h-1zM159 203h5V258h-5zM177 236h1V268h-1zM175 238h5V246h-5zM193 234h1V256h-1zM191 236h5V250h-5zM201 217h1V261h-1zM199 248h5V250h-5zM217 241h1V298h-1zM215 250h5V298h-5zM233 287h1V314h-1zM231 288h5V310h-5zM257 285h1V300h-1zM255 285h5V299h-5zM265 297h1V309h-1zM263 297h5V304h-5zM273 305h1V351h-1zM271 307h5V342h-5zM305 290h1V298h-1zM303 291h5V297h-5zM321 295h1V309h-1zM319 297h5V307h-5zM329 299h1V317h-1zM327 307h5V313h-5zM337 310h1V338h-1zM335 310h5V330h-5zM345 324h1V365h-1zM343 328h5V361h-5zM361 337h1V368h-1zM359 355h5V359h-5zM385 332h1V345h-1zM383 340h5V345h-5zM393 336h1V355h-1zM391 342h5V344h-5zM401 341h1V365h-1zM399 342h5V350h-5zM417 331h1V363h-1zM415 339h5V358h-5zM441 337h1V355h-1zM439 343h5V355h-5zM457 341h1V351h-1zM455 343h5V349h-5zM473 346h1V363h-1zM471 348h5V359h-5zM505 333h1V342h-1zM503 336h5V338h-5zM521 334h1V354h-1zM519 337h5V353h-5zM529 351h1V372h-1zM527 351h5V363h-5zM585 247h1V277h-1zM583 252h5V268h-5zM609 185h1V200h-1zM607 189h5V196h-5zM625 157h1V188h-1zM623 167h5V186h-5zM641 187h1V198h-1zM639 189h5V198h-5zM689 173h1V181h-1zM687 175h5V180h-5zM705 176h1V195h-1zM703 176h5V190h-5zM713 185h1V195h-1zM711 191h5V194h-5zM745 141h1V177h-1zM743 173h5V175h-5zM761 153h1V173h-1zM759 166h5V169h-5zM777 129h1V171h-1zM775 143h5V160h-5zM785 156h1V205h-1zM783 162h5V202h-5zM793 191h1V268h-1zM791 196h5V266h-5zM825 227h1V249h-1zM823 231h5V249h-5zM841 229h1V240h-1zM839 231h5V235h-5zM849 231h1V243h-1zM847 231h5V237h-5zM865 238h1V247h-1zM863 238h5V243h-5zM881 229h1V243h-1zM879 237h5V239h-5zM889 238h1V246h-1zM887 240h5V243h-5zM921 210h1V253h-1zM919 221h5V247h-5zM937 242h1V274h-1zM935 248h5V269h-5zM945 239h1V270h-1zM943 265h5V270h-5zM953 250h1V281h-1zM951 271h5V277h-5zM961 278h1V293h-1zM959 278h5V283h-5z" fill="#ff0000"/>
<rect x="6" y="106" width="2" height="615" fill="#000"/><rect x="8" y="108" width="1" height="280" fill="#fff"/>
<g clip-path="url(#dash)" fill="none" stroke-width="1">
<polyline points="9.0,307.0 24.5,304.0 50.7,300.0 73.0,297.0 98.0,293.9 121.7,290.0 146.0,286.5 170.0,284.5 194.0,282.6 201.0,282.7 267.0,283.0 273.0,284.0 291.0,285.0 315.0,285.6 321.0,285.3 339.0,286.6 345.0,287.0 363.0,289.5 369.0,290.5 387.0,291.4 393.0,292.7 411.0,293.0 417.0,294.6 435.0,296.6 441.0,297.0 459.0,298.5 465.0,299.5 483.0,301.0 489.0,301.4 507.0,302.4 513.0,302.4 531.0,304.3 537.0,304.3 555.0,304.3 561.0,303.4 579.0,302.4 585.0,302.4 603.0,299.5 609.0,298.0 627.0,294.6 633.0,293.0 650.0,290.0 681.0,284.4 699.0,282.0 705.0,281.0 723.0,279.0 729.0,276.8 740.0,275.2 780.0,268.0 785.0,267.4 801.0,266.6 819.0,265.4 825.0,265.0 843.0,264.0 849.0,264.0 867.0,263.5 873.0,263.0 891.0,262.0 897.0,262.0 915.0,261.5 961.0,261.5" stroke="#ff4500"/>
<polyline points="9.0,292.3 26.0,291.0 50.7,289.0 73.0,287.4 98.0,285.5 121.7,283.3 146.0,281.6 170.0,280.0 193.7,279.0 201.0,279.4 210.0,278.0 219.0,279.4 267.0,280.0 291.0,281.0 315.0,281.3 339.0,281.7 345.0,283.0 363.0,284.0 369.0,284.8 387.0,285.0 393.0,286.4 411.0,287.4 417.0,287.4 435.0,288.8 441.0,289.4 459.0,290.7 465.0,290.0 483.0,292.7 489.0,292.0 507.0,293.0 513.0,293.0 531.0,294.6 537.0,295.0 555.0,295.0 561.0,294.6 579.0,294.6 585.0,293.0 603.0,292.0 609.0,291.0 627.0,289.7 633.0,288.4 650.0,287.4 669.0,284.4 681.0,284.0 705.0,281.0 723.0,278.7 729.0,278.0 740.0,277.0 780.0,273.0 793.0,272.4 801.0,271.5 819.0,271.5 825.0,270.9 843.0,270.5 849.0,270.0 867.0,269.3 891.0,269.0 897.0,268.5 921.0,268.5 939.0,268.0 945.0,267.4 961.0,268.3" stroke="#ffffff"/>
<polyline points="9.0,290.0 26.4,285.5 34.0,282.2 50.7,277.3 57.5,275.2 73.0,271.5 82.0,269.0 98.4,265.6 105.0,263.0 121.7,259.6 129.5,257.0 146.0,253.6 153.0,251.0 170.0,251.0 178.0,251.0 193.7,250.5 201.0,250.0 217.5,252.0 225.5,253.0 243.0,257.4 249.5,258.0 267.0,261.0 273.0,263.8 291.0,267.7 297.0,268.0 315.0,270.4 321.0,271.4 339.0,275.0 345.0,278.0 363.0,284.0 369.0,286.0 387.0,290.5 393.0,291.4 411.0,295.6 417.0,297.0 435.0,301.4 441.0,303.0 459.0,306.7 465.0,307.0 483.0,311.7 489.0,312.0 507.0,313.5 513.0,314.5 531.0,318.0 537.0,318.5 555.0,317.0 561.0,315.4 579.0,311.0 585.0,309.0 603.0,302.4 609.0,298.5 627.0,289.7 633.0,286.4 651.0,279.0 657.0,276.0 675.0,270.0 681.0,267.4 699.0,260.6 705.0,258.3 723.0,253.4 729.0,251.5 747.0,245.0 753.0,242.0 771.0,236.3 777.0,233.8 785.0,232.4 793.0,234.5 801.0,234.5 849.0,235.0 867.0,235.5 897.0,236.4 915.0,235.5 921.0,235.5 939.0,237.0 945.0,239.0 961.0,241.3" stroke="#ffff00"/>
<polyline points="9.0,279.0 26.4,272.5 33.0,269.5 50.7,262.0 57.5,260.0 73.0,255.3 82.0,253.0 98.4,248.5 105.0,246.0 121.7,241.3 129.5,239.0 146.0,235.0 153.0,233.5 160.6,235.0 170.0,235.3 178.0,235.3 193.7,236.3 201.5,237.0 217.5,241.0 225.5,244.4 243.0,251.6 249.5,252.0 267.0,259.0 273.0,263.0 291.0,268.0 297.0,270.0 315.0,272.4 321.0,274.0 339.0,280.0 345.0,284.0 363.0,292.0 369.0,295.0 387.0,301.0 393.0,303.0 400.5,305.3 411.0,307.6 417.0,310.0 435.0,314.5 441.0,316.0 459.0,320.5 465.0,321.5 483.0,325.4 489.0,326.3 507.0,327.7 513.0,328.3 531.0,331.0 537.0,332.5 555.0,327.3 561.0,324.4 579.0,317.4 585.0,314.5 603.0,301.0 609.0,298.0 627.0,282.0 633.0,277.0 651.0,267.4 657.0,264.5 675.0,254.8 681.0,250.0 699.0,242.0 705.0,239.0 723.0,234.4 729.0,232.4 747.0,224.6 753.0,221.7 771.0,214.3 777.0,211.6 785.0,210.0 793.0,213.5 801.0,215.0 819.0,217.6 825.0,219.0 843.0,221.0 849.0,222.0 867.0,224.0 873.0,225.0 891.0,226.5 897.0,227.5 915.0,227.0 921.0,228.0 939.0,232.4 945.0,234.0 961.0,239.4" stroke="#ff00ff"/>
</g>
<g stroke="#ffc0cb" stroke-width="1" fill="none">
<line x1="705" y1="113.2" x2="961.5" y2="215.7"/>
<line x1="705" y1="173.4" x2="961.5" y2="275.9"/>
<line x1="705" y1="233.4" x2="961.5" y2="335.9"/>
</g>
<g stroke="#c8c8c8" stroke-dasharray="3 3" fill="none"><line x1="9" y1="422.5" x2="982" y2="422.5"/><line x1="9" y1="517.5" x2="982" y2="517.5"/></g>
<polyline points="9.0,427.3 17.0,451.8 25.0,451.8 33.0,445.5 41.0,443.0 49.0,442.6 57.0,452.3 65.0,455.5 73.0,457.9 81.0,453.5 89.0,452.3 97.0,449.9 105.0,446.2 113.0,445.0 121.0,452.8 129.0,451.0 137.0,450.4 145.0,449.9 153.0,446.7 161.0,499.0 169.0,482.7 177.0,485.6 185.0,479.8 193.0,486.8 201.0,486.8 209.0,486.8 217.0,509.0 225.0,507.0 233.0,511.9 241.0,501.6 249.0,487.6 257.0,494.4 265.0,497.3 273.0,509.9 281.0,501.4 289.0,481.5 297.0,474.9 305.0,476.9 313.0,476.9 321.0,481.5 329.0,485.9 337.0,494.9 345.0,506.0 353.0,503.4 361.0,502.9 369.0,494.9 377.0,487.0 385.0,488.8 393.0,488.8 401.0,492.0 409.0,479.0 417.0,492.4 425.0,483.9 433.0,481.0 441.0,487.0 449.0,475.9 457.0,479.0 465.0,477.8 473.0,485.9 481.0,486.1 489.0,476.6 497.0,462.8 505.0,465.0 513.0,465.0 521.0,479.8 529.0,488.0 537.0,466.9 545.0,449.9 553.0,432.9 561.0,435.8 569.0,434.6 577.0,429.7 585.0,443.0 593.0,430.4 601.0,423.9 609.0,425.0 617.0,420.9 625.0,431.6 633.0,432.9 641.0,439.7 649.0,439.4 657.0,438.4 665.0,435.8 673.0,436.5 681.0,434.8 689.0,437.0 697.0,437.0 705.0,448.7 713.0,452.8 721.0,452.0 729.0,452.9 737.0,436.5 745.0,445.0 753.0,441.9 761.0,442.6 769.0,428.5 777.0,448.7 785.0,479.0 793.0,502.2 801.0,488.0 809.0,487.6 817.0,484.7 825.0,489.3 833.0,481.0 841.0,482.0 849.0,482.0 857.0,482.0 865.0,485.9 873.0,485.9 881.0,482.0 889.0,485.0 897.0,485.0 905.0,470.5 913.0,466.0 921.0,484.4 929.0,487.6 937.0,497.3 945.0,497.8 953.0,501.4 961.0,505.0" fill="none" stroke="#fff" stroke-width="2" stroke-linejoin="round"/>
<path d="M17 626h1V628h-1zM25 626h1V640h-1zM33 626h1V639h-1zM41 626h1V634h-1zM49 626h1V629h-1zM57 626h1V634h-1zM65 626h1V640h-1zM73 626h1V645h-1zM81 626h1V642h-1zM89 626h1V637h-1zM97 626h1V632h-1zM105 626h1V628h-1zM121 626h1V629h-1zM129 626h1V631h-1zM137 626h1V631h-1zM145 626h1V632h-1zM153 626h1V629h-1zM161 626h1V659h-1zM169 626h1V660h-1zM177 626h1V659h-1zM185 626h1V648h-1zM193 626h1V643h-1zM201 626h1V639h-1zM209 626h1V634h-1zM217 626h1V659h-1zM225 626h1V662h-1zM233 626h1V665h-1zM241 626h1V654h-1zM249 626h1V632h-1zM257 626h1V628h-1zM265 626h1V627h-1zM273 626h1V647h-1zM281 626h1V648h-1zM289 626h1V627h-1zM337 626h1V636h-1zM345 626h1V654h-1zM353 626h1V656h-1zM361 626h1V651h-1zM369 626h1V636h-1zM481 626h1V627h-1zM529 626h1V632h-1zM641 626h1V634h-1zM649 626h1V642h-1zM657 626h1V643h-1zM665 626h1V639h-1zM673 626h1V637h-1zM681 626h1V634h-1zM689 626h1V634h-1zM697 626h1V636h-1zM705 626h1V643h-1zM713 626h1V648h-1zM721 626h1V648h-1zM729 626h1V645h-1zM737 626h1V630h-1zM745 626h1V627h-1zM785 626h1V650h-1zM793 626h1V696h-1zM801 626h1V696h-1zM809 626h1V685h-1zM817 626h1V662h-1zM825 626h1V650h-1zM833 626h1V637h-1zM841 626h1V628h-1zM865 626h1V627h-1zM873 626h1V628h-1zM929 626h1V631h-1zM937 626h1V643h-1zM945 626h1V648h-1zM953 626h1V647h-1zM961 626h1V646h-1z" fill="#008000"/>
<path d="M9 598h1V627h-1zM297 609h1V627h-1zM305 601h1V627h-1zM313 603h1V627h-1zM321 614h1V627h-1zM329 625h1V627h-1zM377 620h1V627h-1zM385 615h1V627h-1zM393 613h1V627h-1zM401 617h1V627h-1zM409 613h1V627h-1zM417 622h1V627h-1zM425 622h1V627h-1zM433 619h1V627h-1zM441 623h1V627h-1zM449 616h1V627h-1zM457 618h1V627h-1zM465 618h1V627h-1zM473 624h1V627h-1zM489 623h1V627h-1zM497 612h1V627h-1zM505 609h1V627h-1zM513 610h1V627h-1zM521 622h1V627h-1zM537 625h1V627h-1zM545 609h1V627h-1zM553 575h1V627h-1zM561 569h1V627h-1zM569 575h1V627h-1zM577 581h1V627h-1zM585 602h1V627h-1zM593 595h1V627h-1zM601 580h1V627h-1zM609 582h1V627h-1zM617 578h1V627h-1zM625 598h1V627h-1zM633 617h1V627h-1zM753 625h1V627h-1zM761 625h1V627h-1zM769 616h1V627h-1zM777 623h1V627h-1zM857 625h1V627h-1zM905 620h1V627h-1zM913 614h1V627h-1zM921 624h1V627h-1z" fill="#ff0000"/>
<polyline points="9.0,574.7 17.0,580.7 25.0,584.6 33.0,584.6 41.0,584.6 49.0,585.9 57.0,589.5 65.0,593.0 73.0,596.0 81.0,597.8 89.0,598.5 97.0,598.5 105.0,598.5 113.0,599.0 121.0,601.0 129.0,601.7 137.0,602.6 145.0,602.6 153.0,603.4 161.0,616.3 169.0,619.9 177.0,624.5 185.0,624.5 193.0,628.0 201.0,630.0 209.0,630.0 217.0,643.5 225.0,649.6 233.0,655.7 241.0,655.7 249.0,653.4 257.0,654.4 265.0,655.7 273.0,663.0 281.0,665.9 289.0,659.3 297.0,652.7 305.0,649.6 313.0,646.7 321.0,647.0 329.0,648.4 337.0,652.0 345.0,660.5 353.0,664.9 361.0,666.6 369.0,665.9 377.0,662.5 385.0,660.5 393.0,658.6 401.0,657.4 409.0,653.7 417.0,655.7 425.0,653.7 433.0,651.5 441.0,651.5 449.0,648.4 457.0,647.0 465.0,647.0 473.0,647.0 481.0,647.0 489.0,645.5 497.0,640.6 505.0,637.9 513.0,636.9 521.0,638.6 529.0,641.0 537.0,639.4 545.0,630.6 553.0,615.5 561.0,607.0 569.0,600.9 577.0,594.0 585.0,594.0 593.0,583.9 601.0,573.7 609.0,567.4 617.0,560.0 625.0,560.0 633.0,561.5 641.0,565.0 649.0,568.6 657.0,570.5 665.0,571.8 673.0,573.7 681.0,574.7 689.0,576.6 697.0,578.6 705.0,582.7 713.0,587.6 721.0,590.7 729.0,592.4 737.0,590.0 745.0,590.0 753.0,590.0 761.0,590.0 769.0,586.3 777.0,587.6 785.0,602.0 793.0,619.0 801.0,627.7 809.0,632.5 817.0,633.8 825.0,637.4 833.0,637.4 841.0,636.4 849.0,636.4 857.0,636.4 865.0,636.9 873.0,636.9 881.0,636.9 889.0,636.9 897.0,636.2 905.0,633.8 913.0,630.8 921.0,632.5 929.0,635.0 937.0,641.8 945.0,644.7 953.0,647.6 961.0,650.0" fill="none" stroke="#c0c0c0" stroke-width="2" stroke-linejoin="round"/>
<polyline points="9.0,583.9 17.0,579.8 25.0,579.0 33.0,579.8 41.0,581.5 49.0,583.9 57.0,585.9 65.0,588.3 73.0,590.0 81.0,592.4 89.0,595.3 97.0,596.8 105.0,597.3 113.0,598.5 121.0,599.0 129.0,600.2 137.0,601.0 145.0,601.7 153.0,602.6 161.0,605.8 169.0,609.4 177.0,613.0 185.0,618.0 193.0,623.3 201.0,626.5 209.0,628.9 217.0,632.5 225.0,636.9 233.0,642.3 241.0,648.4 249.0,652.0 257.0,653.7 265.0,655.7 273.0,656.9 281.0,658.6 289.0,659.8 297.0,658.6 305.0,658.0 313.0,654.9 321.0,652.0 329.0,649.6 337.0,649.6 345.0,652.0 353.0,655.7 361.0,659.3 369.0,662.2 377.0,664.2 385.0,664.2 393.0,663.0 401.0,661.0 409.0,658.8 417.0,657.6 425.0,656.0 433.0,654.4 441.0,653.2 449.0,651.3 457.0,650.0 465.0,649.0 473.0,648.4 481.0,647.6 489.0,646.7 497.0,644.7 505.0,643.0 513.0,640.6 521.0,639.0 529.0,638.6 537.0,637.9 545.0,634.5 553.0,630.6 561.0,625.7 569.0,617.5 577.0,608.7 585.0,602.0 593.0,596.0 601.0,589.5 609.0,583.4 617.0,575.4 625.0,568.6 633.0,564.5 641.0,563.2 649.0,563.2 657.0,565.0 665.0,566.9 673.0,569.8 681.0,571.3 689.0,573.7 697.0,576.0 705.0,577.8 713.0,579.8 721.0,583.9 729.0,586.8 737.0,588.8 745.0,590.0 753.0,590.0 761.0,590.0 769.0,588.8 777.0,588.8 785.0,592.4 793.0,599.7 801.0,608.2 809.0,617.5 817.0,625.3 825.0,631.3 833.0,635.0 841.0,636.2 849.0,636.4 857.0,636.6 865.0,636.9 873.0,636.9 881.0,636.9 889.0,636.9 897.0,636.9 905.0,636.2 913.0,635.5 921.0,634.5 929.0,634.5 937.0,635.7 945.0,637.4 953.0,640.3 961.0,643.5" fill="none" stroke="#ffff00" stroke-width="1"/>
<g fill="#fff">
<rect x="9" y="705" width="1" height="3"/>
<rect x="73" y="705" width="1" height="3"/>
<rect x="137" y="705" width="1" height="3"/>
<rect x="201" y="705" width="1" height="3"/>
<rect x="265" y="705" width="1" height="3"/>
<rect x="329" y="705" width="1" height="3"/>
<rect x="393" y="705" width="1" height="3"/>
<rect x="457" y="705" width="1" height="3"/>
<rect x="521" y="705" width="1" height="3"/>
<rect x="585" y="705" width="1" height="3"/>
<rect x="649" y="705" width="1" height="3"/>
<rect x="713" y="705" width="1" height="3"/>
<rect x="777" y="705" width="1" height="3"/>
<rect x="841" y="705" width="1" height="3"/>
<rect x="905" y="705" width="1" height="3"/>
<rect x="983" y="116" width="2" height="1"/>
<rect x="983" y="149" width="2" height="1"/>
<rect x="983" y="182" width="2" height="1"/>
<rect x="983" y="215" width="2" height="1"/>
<rect x="983" y="249" width="2" height="1"/>
<rect x="983" y="315" width="2" height="1"/>
<rect x="983" y="348" width="2" height="1"/>
<rect x="983" y="382" width="2" height="1"/>
<rect x="983" y="390" width="2" height="1"/>
<rect x="983" y="422" width="2" height="1"/>
<rect x="983" y="517" width="2" height="1"/>
<rect x="983" y="548" width="2" height="1"/>
<rect x="983" y="553" width="2" height="1"/>
<rect x="983" y="626" width="2" height="1"/>
<rect x="983" y="703" width="2" height="1"/>
</g>
<rect x="985" y="276" width="34" height="12" fill="#fff"/>
<g font-family="'Liberation Sans',Arial,sans-serif" font-size="9.4px" fill="#fff">
<g style="letter-spacing:-0.2px">
<text x="989" y="118.6">1.7605</text>
<text x="989" y="151.6">1.7575</text>
<text x="989" y="184.6">1.7545</text>
<text x="989" y="217.6">1.7515</text>
<text x="989" y="251.6">1.7485</text>
<text x="989" y="317.6">1.7425</text>
<text x="989" y="350.6">1.7395</text>
<text x="989" y="384.6">1.7365</text>
<text x="988.5" y="284.8" fill="#000">1.7454</text>
<text x="986.5" y="399.8">100</text>
<text x="986.5" y="424.8">80</text>
<text x="986.5" y="519.8">20</text>
<text x="986.5" y="545.8">0</text>
<text x="986" y="562">0.0084</text>
<text x="986" y="629">0.00</text>
<text x="986" y="700">-0.0089</text>
</g>
<text x="7.5" y="716.6" style="letter-spacing:-0.1px">23 Feb 2006</text>
<text x="71.5" y="716.6" style="letter-spacing:-0.1px">23 Feb 23:00</text>
<text x="135.5" y="716.6" style="letter-spacing:-0.1px">24 Feb 07:00</text>
<text x="199.5" y="716.6" style="letter-spacing:-0.1px">24 Feb 15:00</text>
<text x="263.5" y="716.6" style="letter-spacing:-0.1px">27 Feb 00:00</text>
<text x="327.5" y="716.6" style="letter-spacing:-0.1px">27 Feb 08:00</text>
<text x="391.5" y="716.6" style="letter-spacing:-0.1px">27 Feb 16:00</text>
<text x="455.5" y="716.6" style="letter-spacing:-0.1px">28 Feb 00:00</text>
<text x="519.5" y="716.6" style="letter-spacing:-0.1px">28 Feb 08:00</text>
<text x="583.5" y="716.6" style="letter-spacing:-0.1px">28 Feb 16:00</text>
<text x="647.5" y="716.6" style="letter-spacing:-0.1px">1 Mar 00:00</text>
<text x="711.5" y="716.6" style="letter-spacing:-0.1px">1 Mar 08:00</text>
<text x="775.5" y="716.6" style="letter-spacing:-0.1px">1 Mar 16:00</text>
<text x="839.5" y="716.6" style="letter-spacing:-0.1px">2 Mar 00:00</text>
<text x="903.5" y="716.6" style="letter-spacing:-0.1px">2 Mar 08:00</text>
<text x="13" y="119.8" id="lb1">GBPUSD,H1&#160; 1.7458 1.7458 1.7445 1.7454</text>
<text x="12.3" y="402.8" id="lb2">RSI(10) 27.5374</text>
<text x="12.3" y="564.8" id="lb3">MACD(5,34,5) -0.0028 -0.0020 -0.0023</text>
</g>
</svg>
<div class="abs" style="left:1022px;top:105px;width:2px;height:639px;background:#fff"></div>
<div id="tabs">
<div class="abs" style="left:0;top:0;width:1017px;height:2px;background:#fff"></div>
<div class="abs" style="left:0;top:2px;width:1017px;height:1px;background:#000"></div>
<div class="abs" style="left:0;top:2px;width:1px;height:19px;background:#404040"></div>
<div class="abs" style="left:555px;top:0;width:80px;height:21px;background:#fff;border:1px solid #000;border-top:none;box-sizing:border-box"></div>
<div class="tab" style="left:13.2px">EURUSD,H4</div>
<div class="tab" style="left:93px">EURUSD,H1</div>
<div class="tab" style="left:173px">USDX,H4</div>
<div class="tab" style="left:238px">GBPUSD,H4</div>
<div class="tab" style="left:317px">USDJPY,M30</div>
<div class="tab" style="left:401px">USDJPY,H4</div>
<div class="tab" style="left:477px">USDCHF,M30</div>
<div class="tab" style="left:645px">EURGBP,Daily</div>
<div class="tab" style="left:734px">EURJPY,Daily</div>
<div class="tab" style="left:820px">GBPJPY,Daily</div>
<div class="tab" style="left:904px">EURCHF,Daily</div>
<div class="tab" style="left:567px;color:#000">GBPUSD,H1</div>
<div class="sp" style="left:83px"></div>
<div class="sp" style="left:163px"></div>
<div class="sp" style="left:227px"></div>
<div class="sp" style="left:306px"></div>
<div class="sp" style="left:390px"></div>
<div class="sp" style="left:467px"></div>
<div class="sp" style="left:723px"></div>
<div class="sp" style="left:809px"></div>
<div class="sp" style="left:895px"></div>
<div class="abs" style="left:990px;top:9px;width:0;height:0;border-top:3.500px solid transparent;border-bottom:3.500px solid transparent;border-right:4px solid #aca899"></div>
<div class="abs" style="left:1007px;top:9px;width:0;height:0;border-top:3.500px solid transparent;border-bottom:3.500px solid transparent;border-left:4px solid #000"></div>
</div>
<div class="abs" style="left:5px;top:744px;width:1019px;height:1px;background:#fff"></div>
<div id="bb"></div>
</body></html>
